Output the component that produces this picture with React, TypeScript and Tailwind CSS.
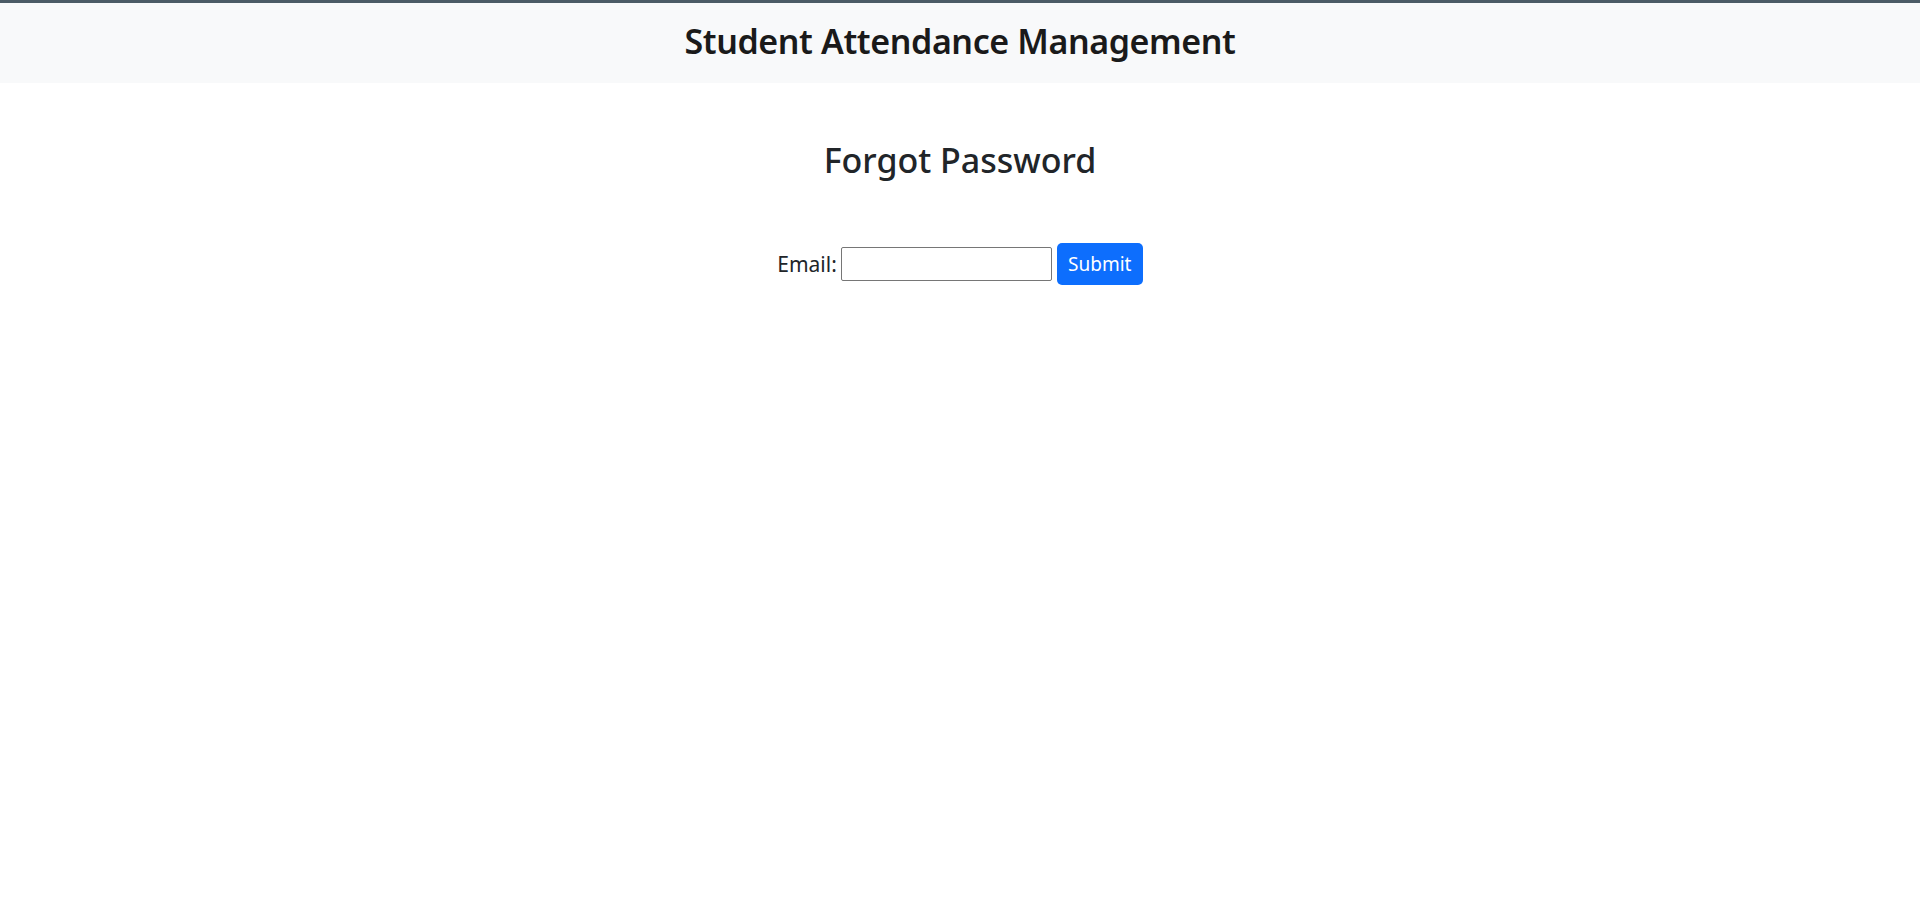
import React from "react";

export default function App() {
  return (
    <div className="min-h-[922px] bg-white text-[#212529]" style={{ fontFamily: '"Noto Sans", "Open Sans", sans-serif' }}>
      <header className="h-[83px] border-t-[3px] border-[#4b5b66] bg-[#f8f9fa] flex items-center justify-center pb-[5px]">
        <h1 className="text-[34px] font-semibold leading-none tracking-[-0.4px] text-[#1a1a1a]">Student Attendance Management</h1>
      </header>
      <main className="flex flex-col items-center">
        <h2 className="mt-[57px] text-[34px] font-medium leading-[40px]">Forgot Password</h2>
        <form className="mt-[63px] flex items-center" onSubmit={(e) => e.preventDefault()}>
          <label className="text-[21px] font-normal mr-[4px] leading-none">Email:</label>
          <input type="email" className="w-[211px] h-[34px] border border-[#767676] rounded-[2px] outline-none px-1 text-[16px]" />
          <button type="submit" className="ml-[5px] w-[86px] h-[42px] rounded-[5px] bg-[#0d6efd] text-white text-[19px] leading-none">Submit</button>
        </form>
      </main>
    </div>
  );
}
